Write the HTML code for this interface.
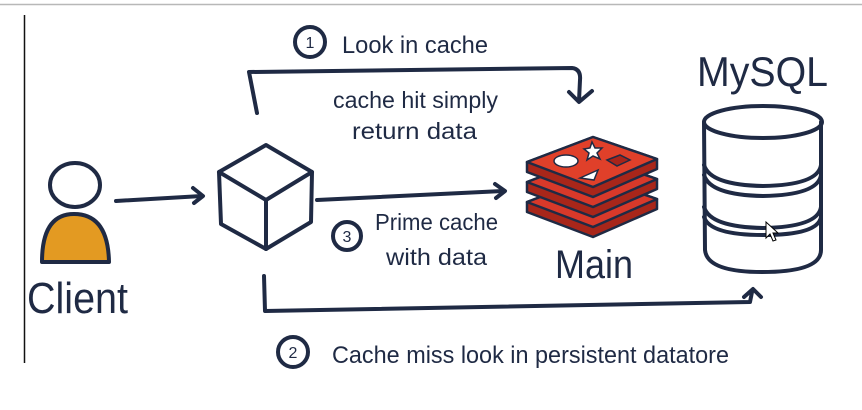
<!DOCTYPE html>
<html><head><meta charset="utf-8"><style>
html,body{margin:0;padding:0;background:#fff;width:862px;height:410px;overflow:hidden}
svg{display:block}
text{font-family:"Liberation Sans",sans-serif;fill:#1f2a44}
</style></head><body>
<svg width="862" height="410" viewBox="0 0 862 410" xmlns="http://www.w3.org/2000/svg">
<rect width="862" height="410" fill="#fff"/>
<line x1="0" y1="4.5" x2="862" y2="4.5" stroke="#b8b8b8" stroke-width="1.5"/>
<line x1="24.5" y1="15" x2="24.5" y2="363" stroke="#111" stroke-width="1.5"/>
<g fill="none" stroke="#1f2a44" stroke-width="4" stroke-linecap="round" stroke-linejoin="round">
<ellipse cx="75" cy="185" rx="25" ry="22"/>
<path d="M42 262 Q42 214 74 214 Q108 214 109 262 Z" fill="#e39a22"/>
<path d="M116 201 L202 196"/><path d="M193 188 L203 196 L194 203"/>
<path d="M266 145 L312 172 L311 222 L266 249 L221 224 L219 172 Z"/>
<path d="M219 172 L266 200 L312 172 M266 200 L266 249"/>
<path d="M257 113 L249 72 L572 68 Q581 69 580 80 L579 101"/><path d="M569 92 L579 102 L592 91"/>
<path d="M317 200 L503 191"/><path d="M495 184 L505 191 L496 198"/>
<path d="M264 276 L265 311 L750 302 L752 292"/><path d="M744 297 L753 289 L761 297"/>
<circle cx="310" cy="42" r="15"/><circle cx="347" cy="236" r="14"/><circle cx="293" cy="352" r="15"/>
<path d="M704 122 L705 250 Q707 272 762 272 Q821 272 821 250 L821 122"/>
<ellipse cx="763" cy="122" rx="59" ry="16"/>
<path d="M704 165 Q710 185 763 186 Q818 185 821 165"/>
<path d="M704 175 Q710 195 763 196 Q818 195 821 175"/>
<path d="M704 207 Q710 227 763 228 Q818 227 821 207"/>
<path d="M704 217 Q710 235 763 235 Q818 235 821 217"/>
</g>
<g stroke="#1f2a44" stroke-width="2.5" stroke-linejoin="round">
<path d="M527 202 L593 177 L657 199 L657 209 L593 237 L527 212 Z" fill="#a8261a"/>
<path d="M527 202 L593 177 L657 199 L593 227 Z" fill="#d8392a"/>
<path d="M527 182 L593 157 L657 179 L657 189 L593 217 L527 192 Z" fill="#a8261a"/>
<path d="M527 182 L593 157 L657 179 L593 207 Z" fill="#d8392a"/>
<path d="M527 162 L593 137 L657 159 L657 169 L593 197 L527 172 Z" fill="#a8261a"/>
<path d="M527 162 L593 137 L657 159 L593 187 Z" fill="#e0402a"/>
</g>
<ellipse cx="566" cy="161" rx="12" ry="6" fill="#fff" stroke="#1f2a44" stroke-width="1.5"/>
<path d="M592 142 L595 148 L602 148 L597 153 L600 159 L593 156 L587 160 L589 153 L584 149 L590 148 Z" fill="#fff" stroke="#1f2a44" stroke-width="1.5"/>
<path d="M580 178 L598 170 L594 180 Z" fill="#fff" stroke="#1f2a44" stroke-width="1.5"/>
<path d="M607 160 L620 155 L630 160 L617 166 Z" fill="#a8241a" stroke="#1f2a44" stroke-width="1.5"/>
<text x="310" y="48" font-size="16" text-anchor="middle">1</text>
<text x="347" y="242" font-size="16" text-anchor="middle">3</text>
<text x="293" y="358" font-size="16" text-anchor="middle">2</text>
<text x="342" y="53" font-size="24" textLength="146" lengthAdjust="spacingAndGlyphs">Look in cache</text>
<text x="333" y="108" font-size="23" textLength="165" lengthAdjust="spacingAndGlyphs">cache hit simply</text>
<text x="352" y="139" font-size="23" textLength="125" lengthAdjust="spacingAndGlyphs">return data</text>
<text x="375" y="230" font-size="23" textLength="123" lengthAdjust="spacingAndGlyphs">Prime cache</text>
<text x="386" y="265" font-size="23" textLength="101" lengthAdjust="spacingAndGlyphs">with data</text>
<text x="332" y="363" font-size="24" textLength="397" lengthAdjust="spacingAndGlyphs">Cache miss look in persistent datatore</text>
<text x="27" y="313" font-size="44" textLength="101" lengthAdjust="spacingAndGlyphs">Client</text>
<text x="555" y="278" font-size="40" textLength="78" lengthAdjust="spacingAndGlyphs">Main</text>
<text x="697" y="86" font-size="42" textLength="131" lengthAdjust="spacingAndGlyphs">MySQL</text>
<path d="M766 222 L766 238 L770 234 L773 241 L776 240 L773 233 L778 233 Z" fill="#fff" stroke="#000" stroke-width="1"/>
</svg>
</body></html>
